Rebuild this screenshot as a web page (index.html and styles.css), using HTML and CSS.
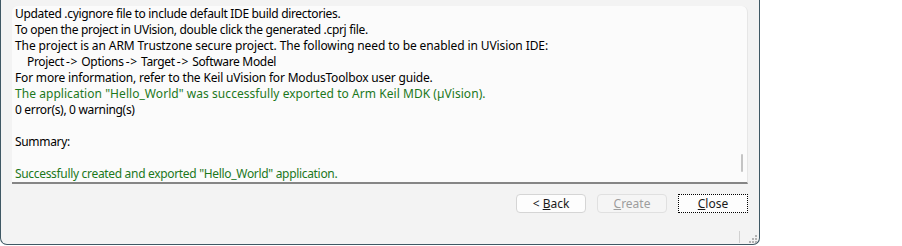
FILE: index.html
```html
<!DOCTYPE html>
<html lang="en">
<head>
    <meta charset="UTF-8">
    <title>Export</title>
    <link rel="stylesheet" href="styles.css">
</head>
<body>
    <div class="window">
        <div class="log">
            <div class="log-lines">
                <p>Updated .cyignore file to include default IDE build directories.</p>
                <p>To open the project in UVision, double click the generated .cprj file.</p>
                <p class="caps">The project is an ARM Trustzone secure project. The following need to be enabled in UVision IDE:</p>
                <p class="indent">Project<span class="arrow">-&gt;</span>Options<span class="arrow">-&gt;</span>Target<span class="arrow">-&gt;</span>Software Model</p>
                <p class="mid">For more information, refer to the Keil uVision for ModusToolbox user guide.</p>
                <p class="ok wide">The application "Hello_World" was successfully exported to Arm Keil MDK (µVision).</p>
                <p>0 error(s), 0 warning(s)</p>
                <p>&nbsp;</p>
                <p>Summary:</p>
                <p>&nbsp;</p>
                <p class="ok">Successfully created and exported "Hello_World" application.</p>
            </div>
            <div class="scroll-thumb"></div>
        </div>

        <div class="buttons">
            <button class="btn"><u>&lt;</u> <u>B</u>ack</button>
            <button class="btn" disabled><u>C</u>reate</button>
            <button class="btn focused"><u>C</u>lose</button>
        </div>

        <div class="status">
            <span class="sep"></span>
            <svg class="grip" width="8" height="8" viewBox="0 0 8 8">
                <rect x="6" y="0" width="2" height="2" fill="#b4b4b4"/>
                <rect x="3" y="3" width="2" height="2" fill="#b4b4b4"/>
                <rect x="6" y="3" width="2" height="2" fill="#b4b4b4"/>
                <rect x="0" y="6" width="2" height="2" fill="#b4b4b4"/>
                <rect x="3" y="6" width="2" height="2" fill="#b4b4b4"/>
                <rect x="6" y="6" width="2" height="2" fill="#b4b4b4"/>
            </svg>
        </div>
    </div>
</body>
</html>
```

FILE: styles.css
```css
* {
    margin: 0;
    padding: 0;
    box-sizing: border-box;
}

body {
    background: white;
    font-family: 'Noto Sans', 'Open Sans', sans-serif;
    font-size: 12px;
    color: #000;
}

.window {
    width: 760px;
    height: 245px;
    background: #f3f3f3;
    border: 1px solid #3f5864;
    border-top: none;
    border-radius: 0 0 7px 7px;
    display: flex;
    flex-direction: column;
    padding: 6px 11px 0 11px;
}

.log {
    position: relative;
    height: 178px;
    background: #fbfbfb;
    border-right: 1px solid #e6e6e6;
    border-bottom: 2px solid #858585;
    border-radius: 6px 6px 0 0;
    overflow: hidden;
}

.log-lines {
    padding: 0 0 0 3px;
    letter-spacing: -0.32px;
}

.log-lines p {
    line-height: 16px;
    height: 16px;
    white-space: nowrap;
}

.log-lines .indent {
    padding-left: 12px;
}

.log-lines .arrow {
    letter-spacing: 0.8px;
    padding: 0 3px 0 2px;
}

.log-lines .caps {
    letter-spacing: -0.1px;
}

.log-lines .mid {
    letter-spacing: -0.18px;
}

.log-lines .ok {
    color: #1c781c;
}

.log-lines .wide {
    letter-spacing: 0.05px;
}

.scroll-thumb {
    position: absolute;
    right: 4px;
    top: 148px;
    width: 2px;
    height: 18px;
    background: #c4c4c4;
    border-radius: 1px;
}

.buttons {
    display: flex;
    justify-content: flex-end;
    gap: 11px;
    padding: 10px 0 0 0;
}

.btn {
    font-family: inherit;
    font-size: 12px;
    width: 70px;
    height: 19px;
    background: #fdfdfd;
    border: 1px solid #d5d5d5;
    border-radius: 4px;
    color: #1a1a1a;
    line-height: 16px;
}

.btn u {
    text-decoration: none;
}

.btn u:not(:first-child),
.btn > u:only-child {
    text-decoration: underline;
}

.btn:disabled {
    background: #f5f5f5;
    color: #9d9d9d;
    border-color: #e0e0e0;
}

.btn.focused {
    border: 1px dotted #000;
    border-radius: 0;
    background: #fdfdfd;
}

.status {
    margin-top: auto;
    display: flex;
    justify-content: flex-end;
    align-items: flex-end;
    height: 14px;
    margin-right: -9px;
    padding-bottom: 1px;
}

.sep {
    width: 1px;
    height: 12px;
    background: #d0d0d0;
    margin-right: 9px;
}

.grip {
    display: block;
}
```
